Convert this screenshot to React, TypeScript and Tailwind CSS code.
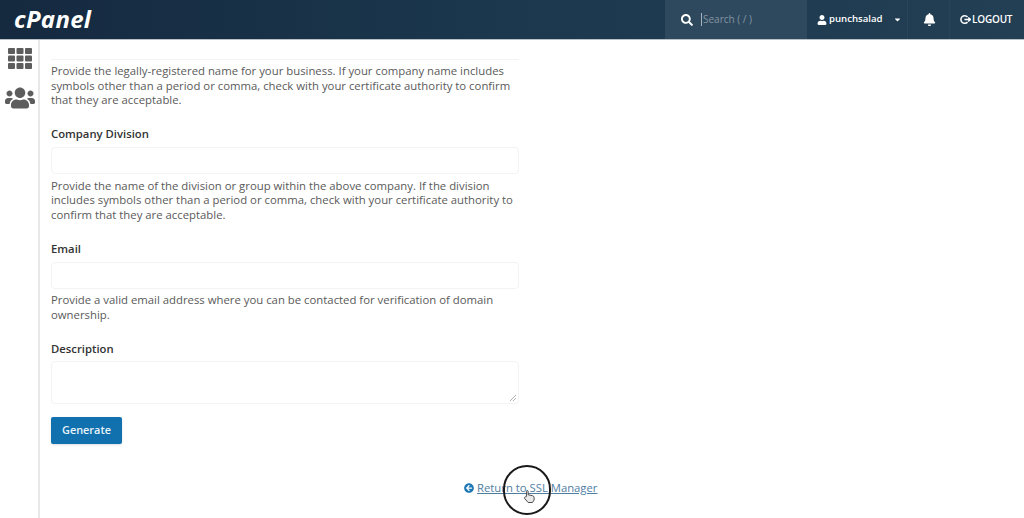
import React from "react";
import { FaSearch, FaUser, FaBell, FaCaretDown, FaUsers, FaArrowCircleLeft } from "react-icons/fa";

function Help({ children }: { children: React.ReactNode }) {
  return <p className="text-[11.35px] leading-[14.5px] text-[#5a5a5a]">{children}</p>;
}

function Label({ children }: { children: React.ReactNode }) {
  return <div className="text-[11.3px] leading-[16px] font-semibold text-[#333]">{children}</div>;
}

function Input() {
  return <div className="h-[27px] rounded-[4px] border border-[#f3f3f3] bg-white" />;
}

export default function App() {
  return (
    <div className="flex h-[518px] w-[1024px] flex-col overflow-hidden bg-white font-['Open_Sans',sans-serif]">
      <header className="flex h-[40px] shrink-0 items-stretch border-b border-[#b9c0c7] bg-gradient-to-r from-[#15293f] via-[#1b384e] to-[#233f54] text-white">
        <div className="pl-[14px] pt-[4px] text-[24px] font-bold italic leading-[30px] tracking-[0.3px]">cPanel</div>
        <div className="flex-1" />
        <div className="flex w-[142px] items-center gap-[8px] bg-[#2e495e] pl-[16px]">
          <FaSearch className="size-[12px] text-white" />
          <span className="flex items-center text-[10px] text-[#8594a2]">
            <span className="mr-px h-[13px] w-px bg-[#a9b4be]" />
            Search ( / )
          </span>
        </div>
        <div className="flex w-[101px] items-center border-r border-[#2a4358] pl-[10px] text-[9.6px] font-semibold">
          <FaUser className="mr-[2px] size-[10px]" />
          <span>punchsalad</span>
          <FaCaretDown className="ml-[11px] size-[9px]" />
        </div>
        <div className="flex w-[42px] items-center justify-center border-r border-[#2a4358] pl-[2px]">
          <FaBell className="size-[13px]" />
        </div>
        <div className="flex w-[74px] items-center gap-[1px] pl-[10px] text-[10px] font-semibold tracking-[-0.2px]">
          <svg viewBox="0 0 16 16" className="size-[11px]" fill="none" stroke="white" strokeWidth="2.2">
            <path d="M11 4.200A5.600 5.600 0 1 0 11 11.800" />
            <path d="M6.500 8H15M12 5l3 3-3 3" />
          </svg>
          LOGOUT
        </div>
      </header>
      <div className="flex min-h-0 flex-1">
        <aside className="flex w-[40px] shrink-0 flex-col items-center border-r-2 border-[#e8e8e8] pl-[2px] pt-[8px] text-[#5d5d5d]">
          <svg viewBox="0 0 24 21" className="h-[21px] w-[24px]" fill="currentColor">
            {[0, 7.500, 15].map((y) =>
              [0, 8.500, 17].map((x) => <rect key={`${x}-${y}`} x={x} y={y} width="7" height="6" rx="1" />),
            )}
          </svg>
          <FaUsers className="mt-[15px] h-[28px] w-[30px]" />
        </aside>
        <main className="min-w-0 flex-1 pl-[11px]">
          <div className="w-[468px]">
            <div className="h-[20px] border-b border-[#f3f3f3]" />
            <div className="mt-[4px]"><Help>Provide the legally-registered name for your business. If your company name includes symbols other than a period or comma, check with your certificate authority to confirm that they are acceptable.</Help></div>
            <div className="mt-[18px]"><Label>Company Division</Label></div>
            <div className="mt-[5px]"><Input /></div>
            <div className="mt-[5px]"><Help>Provide the name of the division or group within the above company. If the division includes symbols other than a period or comma, check with your certificate authority to confirm that they are acceptable.</Help></div>
            <div className="mt-[19px]"><Label>Email</Label></div>
            <div className="mt-[5px]"><Input /></div>
            <div className="mt-[4px]"><Help>Provide a valid email address where you can be contacted for verification of domain ownership.</Help></div>
            <div className="mt-[19px]"><Label>Description</Label></div>
            <div className="relative mt-[4px] h-[43px] rounded-[4px] border border-[#f3f3f3] bg-white">
              <svg viewBox="0 0 8 8" className="absolute bottom-[1px] right-[1px] size-[8px]" stroke="#999" strokeWidth="0.8">
                <path d="M1 7 7 1M4 7 7 4" />
              </svg>
            </div>
            <button className="mt-[13px] block h-[27px] w-[71px] rounded-[2px] bg-[#1071ae] text-[10.9px] font-semibold text-[#e8f3fa] shadow-sm">Generate</button>
          </div>
          <div className="relative mt-[36px] flex w-[900px] pl-[413px]">
            <a className="flex items-center text-[11.3px] leading-[16px] text-[#4f7ea3] underline decoration-[#4f7ea3]">
              <FaArrowCircleLeft className="mr-[3px] size-[10px] text-[#1f78b4]" />
              <span>Return to SSL Manager</span>
            </a>
            <div className="absolute left-[452px] top-[-15px] flex h-[50px] w-[48px] items-end justify-center rounded-full border-2 border-[#1a1a1a] pb-[9px] pl-[4px]">
              <svg viewBox="0 0 14 16" className="h-[15px] w-[12px]" fill="#e8e8e8" stroke="#333" strokeWidth="1">
                <path d="M4 8V2a1 1 0 0 1 2 0v4l5 1q2 .5 2 2.500V12l-2 3H6L2 10.500Q1 9 2.500 8.500Z" />
              </svg>
            </div>
          </div>
        </main>
      </div>
    </div>
  );
}
